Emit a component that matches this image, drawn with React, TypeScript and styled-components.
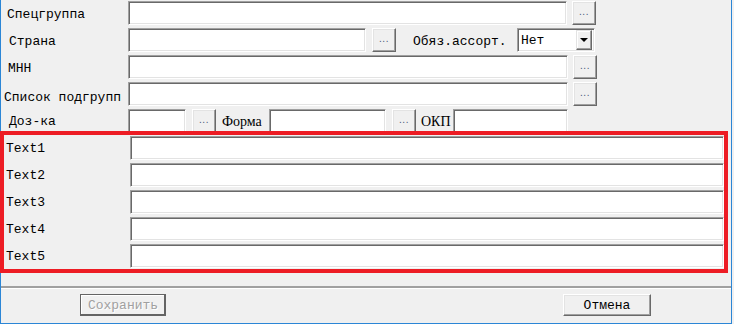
import React from 'react';
import styled, { createGlobalStyle } from 'styled-components';

const GlobalStyle = createGlobalStyle`
  html, body {
    margin: 0;
    padding: 0;
    background: #f0f0f0;
  }
  * {
    box-sizing: border-box;
  }
`;

const Window = styled.div`
  width: 732px;
  height: 324px;
  background: #f0f0f0;
  border-left: 1px solid #2b86d6;
  border-right: 1px solid #2b86d6;
  border-bottom: 1px solid #2b86d6;
  display: flex;
  flex-direction: column;
  font-family: "Liberation Mono", "Courier New", monospace;
  font-size: 13px;
  color: #000;
`;

const TopPanel = styled.div`
  height: 131px;
  overflow: hidden;
  padding-top: 1px;
  display: flex;
  flex-direction: column;
  gap: 3px;
`;

const Row = styled.div`
  display: flex;
  align-items: center;
  height: 24px;
  flex: 0 0 24px;
`;

const Label = styled.div<{ $indent: number; $w?: number; $dy?: number }>`
  width: ${(p) => p.$w ?? 127}px;
  flex: 0 0 auto;
  padding-left: ${(p) => p.$indent}px;
  padding-top: ${(p) => p.$dy ?? 2}px;
  white-space: nowrap;
`;

const InlineLabel = styled.div<{ $ml: number; $w: number; $serif?: boolean }>`
  margin-left: ${(p) => p.$ml}px;
  width: ${(p) => p.$w}px;
  flex: 0 0 auto;
  white-space: nowrap;
  padding-top: 2px;
  font-family: ${(p) => (p.$serif ? '"Liberation Serif", "Times New Roman", serif' : 'inherit')};
  font-size: ${(p) => (p.$serif ? '14px' : 'inherit')};
`;

const Field = styled.input<{ $w?: number }>`
  width: ${(p) => (p.$w ? `${p.$w}px` : 'auto')};
  flex: ${(p) => (p.$w ? '0 0 auto' : '1 1 auto')};
  min-width: 0;
  height: 24px;
  margin: 0;
  padding: 0 3px;
  background: #fff;
  border-style: solid;
  border-width: 1px;
  border-color: #a0a0a0 #fff #fff #a0a0a0;
  box-shadow: inset 1px 1px #696969, inset -1px -1px #e3e3e3;
  font: inherit;
  outline: none;
`;

const DotsButton = styled.button<{ $ml: number }>`
  margin: 0 0 0 ${(p) => p.$ml}px;
  width: 24px;
  height: 24px;
  flex: 0 0 auto;
  padding: 0 0 3px;
  background: #f0f0f0;
  border-style: solid;
  border-width: 1px;
  border-color: #fff #696969 #696969 #fff;
  box-shadow: inset -1px -1px #a0a0a0, inset 1px 1px #e3e3e3;
  font-family: "Liberation Sans", Arial, sans-serif;
  font-size: 10px;
  letter-spacing: 0.5px;
  color: #4a5878;
  line-height: 1;
`;

const Combo = styled.div<{ $w: number }>`
  width: ${(p) => p.$w}px;
  height: 24px;
  flex: 0 0 auto;
  display: flex;
  align-items: center;
  background: #fff;
  border-style: solid;
  border-width: 1px;
  border-color: #a0a0a0 #fff #fff #a0a0a0;
  box-shadow: inset 1px 1px #696969, inset -1px -1px #e3e3e3;
  padding: 2px 2px 2px 3px;
`;

const ComboText = styled.span`
  flex: 1;
  padding-top: 1px;
`;

const ComboArrow = styled.div`
  width: 16px;
  height: 20px;
  display: flex;
  align-items: center;
  justify-content: center;
  background: #f0f0f0;
  border-style: solid;
  border-width: 1px;
  border-color: #e3e3e3 #696969 #696969 #e3e3e3;
  box-shadow: inset -1px -1px #a0a0a0, inset 1px 1px #fff;
  &::after {
    content: "";
    border-left: 4px solid transparent;
    border-right: 4px solid transparent;
    border-top: 4px solid #000;
  }
`;

const Highlight = styled.div`
  margin-left: -1px;
  width: 728px;
  height: 142px;
  border: 4px solid #ed1c24;
  padding: 1px 0 1px 1px;
  display: flex;
  flex-direction: column;
  gap: 3px;
`;

const Separator = styled.div`
  margin-top: 13px;
  height: 3px;
  border-top: 2px solid #a0a0a0;
  border-bottom: 1px solid #fff;
`;

const Footer = styled.div`
  display: flex;
  padding: 5px 0 0 79px;
`;

const DialogButton = styled.button<{ $w: number; $ml?: number; $default?: boolean }>`
  margin: 0 0 0 ${(p) => p.$ml ?? 0}px;
  width: ${(p) => p.$w}px;
  height: 22px;
  padding: 0;
  background: #f0f0f0;
  font: inherit;
  border-style: solid;
  border-width: 1px;
  border-color: ${(p) => (p.$default ? '#646464' : '#fff #696969 #696969 #fff')};
  box-shadow: ${(p) =>
    p.$default
      ? 'inset -1px -1px #646464, inset 1px 1px #fff'
      : 'inset -1px -1px #a0a0a0, inset 1px 1px #e3e3e3'};
  color: ${(p) => (p.$default ? '#a0a0a0' : '#000')};
  text-shadow: ${(p) => (p.$default ? '1px 1px #fff' : 'none')};
`;

const App = () => {
  return (
    <Window>
      <GlobalStyle />
      <TopPanel>
        <Row>
          <Label $indent={6}>Спецгруппа</Label>
          <Field $w={439} />
          <DotsButton $ml={5}>...</DotsButton>
        </Row>
        <Row>
          <Label $indent={8} $dy={3}>Страна</Label>
          <Field $w={238} />
          <DotsButton $ml={6}>...</DotsButton>
          <InlineLabel $ml={17} $w={104}>Обяз.ассорт.</InlineLabel>
          <Combo $w={78}>
            <ComboText>Нет</ComboText>
            <ComboArrow />
          </Combo>
        </Row>
        <Row>
          <Label $indent={7} $dy={3}>МНН</Label>
          <Field $w={440} />
          <DotsButton $ml={5}>...</DotsButton>
        </Row>
        <Row>
          <Label $indent={3} $dy={6}>Список подгрупп</Label>
          <Field $w={440} />
          <DotsButton $ml={5}>...</DotsButton>
        </Row>
        <Row>
          <Label $indent={8} $dy={0}>Доз-ка</Label>
          <Field $w={58} />
          <DotsButton $ml={6}>...</DotsButton>
          <InlineLabel $ml={6} $w={47} $serif>Форма</InlineLabel>
          <Field $w={117} />
          <DotsButton $ml={6}>...</DotsButton>
          <InlineLabel $ml={5} $w={32} $serif>ОКП</InlineLabel>
          <Field $w={115} />
        </Row>
      </TopPanel>
      <Highlight>
        {['Text1', 'Text2', 'Text3', 'Text4', 'Text5'].map((name) => (
          <Row key={name}>
            <Label $indent={1} $w={125} $dy={0}>{name}</Label>
            <Field />
          </Row>
        ))}
      </Highlight>
      <Separator />
      <Footer>
        <DialogButton $w={86} $default disabled>Сохранить</DialogButton>
        <DialogButton $w={88} $ml={397}>Отмена</DialogButton>
      </Footer>
    </Window>
  );
};

export default App;
